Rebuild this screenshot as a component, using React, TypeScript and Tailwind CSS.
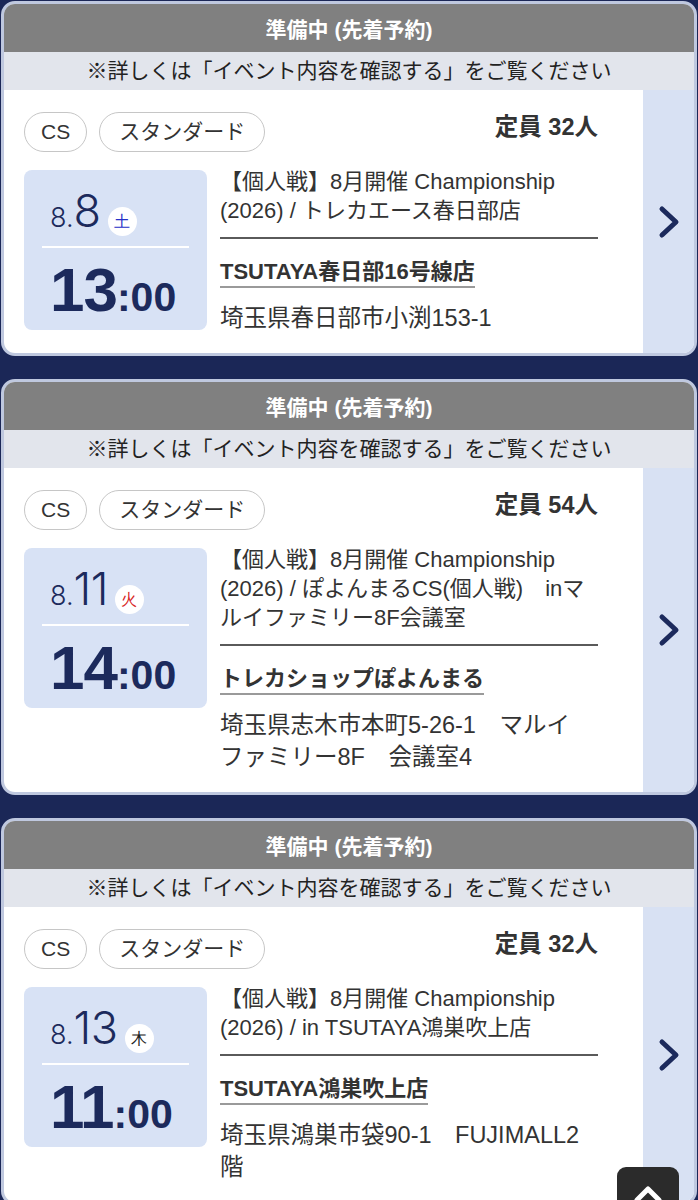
import React from "react";

type Card = {
  cap: string;
  d: string;
  dow: string;
  dowColor: string;
  hh: string;
  title: string[];
  store: string;
  addr: string[];
};

const cards: Card[] = [
  {
    cap: "定員 32人",
    d: "8",
    dow: "土",
    dowColor: "text-[#2630c8]",
    hh: "13",
    title: ["【個人戦】8月開催 Championship", "(2026) / トレカエース春日部店"],
    store: "TSUTAYA春日部16号線店",
    addr: ["埼玉県春日部市小渕153-1"],
  },
  {
    cap: "定員 54人",
    d: "11",
    dow: "火",
    dowColor: "text-[#d8271f]",
    hh: "14",
    title: [
      "【個人戦】8月開催 Championship",
      "(2026) / ぽよんまるCS(個人戦)　inマ",
      "ルイファミリー8F会議室",
    ],
    store: "トレカショップぽよんまる",
    addr: ["埼玉県志木市本町5-26-1　マルイ", "ファミリー8F　会議室4"],
  },
  {
    cap: "定員 32人",
    d: "13",
    dow: "木",
    dowColor: "text-[#222222]",
    hh: "11",
    title: ["【個人戦】8月開催 Championship", "(2026) / in TSUTAYA鴻巣吹上店"],
    store: "TSUTAYA鴻巣吹上店",
    addr: ["埼玉県鴻巣市袋90-1　FUJIMALL2", "階"],
  },
];

function Chevron() {
  return (
    <svg width="22" height="34" viewBox="0 0 22 34" fill="none">
      <polyline
        points="4,4 18,17 4,30"
        stroke="#1c2a5c"
        strokeWidth="5"
        strokeLinecap="round"
        strokeLinejoin="round"
      />
    </svg>
  );
}

function EventCard({ c }: { c: Card }) {
  return (
    <div className="mx-[1px] overflow-hidden rounded-[14px] border-[3px] border-[#bfc8df] bg-white">
      <div className="flex h-[48px] items-center justify-center bg-[#808080] pt-[3px] text-[21px] font-semibold text-white">
        準備中 (先着予約)
      </div>
      <div className="flex h-[38px] items-center justify-center bg-[#e2e5ec] text-[21px] text-[#222]">
        ※詳しくは「イベント内容を確認する」をご覧ください
      </div>
      <div className="flex">
        <div className="min-w-0 flex-1 pb-[19px] pl-[20px] pr-[45px] pt-[22px]">
          <div className="flex items-start justify-between">
            <div className="flex gap-[12px]">
              <span className="flex h-[40px] items-center rounded-full border-[1.5px] border-[#c6c6c6] px-[16px] text-[21px] text-[#333]">
                CS
              </span>
              <span className="flex h-[40px] items-center rounded-full border-[1.5px] border-[#c6c6c6] px-[19px] text-[21px] text-[#333]">
                スタンダード
              </span>
            </div>
            <div className="text-[23.5px] font-bold leading-[30px] text-[#333]">
              {c.cap}
            </div>
          </div>
          <div className="mt-[18px] flex gap-[13px]">
            <div className="h-[160px] w-[183px] shrink-0 rounded-[8px] bg-[#d8e2f5] px-[18px] pt-[7px] text-[#1c2a5c]">
              <div className="flex h-[46px] items-baseline pl-[8px] font-['Inter',sans-serif] font-light">
                <span className="text-[27px]">8.</span>
                <span className="text-[45px] tracking-[-0.5px]">{c.d}</span>
                <span
                  className={`ml-[7px] inline-flex h-[29px] w-[29px] items-center justify-center rounded-full bg-white text-[16px] font-normal ${c.dowColor}`}
                >
                  {c.dow}
                </span>
              </div>
              <div className="mt-[23px] h-[2px] bg-white" />
              <div className="mt-[6px] flex h-[72px] items-baseline pl-[8px] font-['Liberation_Sans',sans-serif] font-bold leading-[72px]">
                <span className="text-[62px] tracking-[-1px]">{c.hh}</span>
                <span className="text-[41px]">:00</span>
              </div>
            </div>
            <div className="min-w-0 flex-1 text-[#333]">
              <div className="-mt-[3px] text-[22px] leading-[29px]">
                {c.title.map((t, i) => (
                  <div key={i} className="whitespace-nowrap">
                    {t}
                  </div>
                ))}
              </div>
              <div className="mt-[12px] h-[2px] bg-[#5a5a5a]" />
              <div className="mt-[20px]">
                <span className="inline-block border-b-2 border-[#9a9a9a] pb-[1px] text-[22px] font-bold leading-[26px]">
                  {c.store}
                </span>
              </div>
              <div className="mt-[14px] text-[23.5px] leading-[32px]">
                {c.addr.map((t, i) => (
                  <div key={i} className="whitespace-nowrap">
                    {t}
                  </div>
                ))}
              </div>
            </div>
          </div>
        </div>
        <div className="flex w-[51px] shrink-0 items-center justify-center bg-[#d8e1f3]">
          <Chevron />
        </div>
      </div>
    </div>
  );
}

export default function App() {
  return (
    <div className="min-h-[1200px] w-[698px] bg-[#1b2757] pt-[1px] font-['Liberation_Sans','Noto_Sans_CJK_JP',sans-serif]">
      <div className="flex flex-col gap-[23px]">
        {cards.map((c, i) => (
          <EventCard key={i} c={c} />
        ))}
      </div>
      <button className="fixed bottom-[-29px] right-[19px] flex h-[62px] w-[62px] items-start justify-center rounded-[9px] bg-[#2b2b2b] pt-[16px]">
        <svg width="30" height="20" viewBox="0 0 30 20" fill="none">
          <polyline
            points="4,17 15,6 26,17"
            stroke="white"
            strokeWidth="5"
            strokeLinecap="round"
            strokeLinejoin="round"
          />
        </svg>
      </button>
    </div>
  );
}
